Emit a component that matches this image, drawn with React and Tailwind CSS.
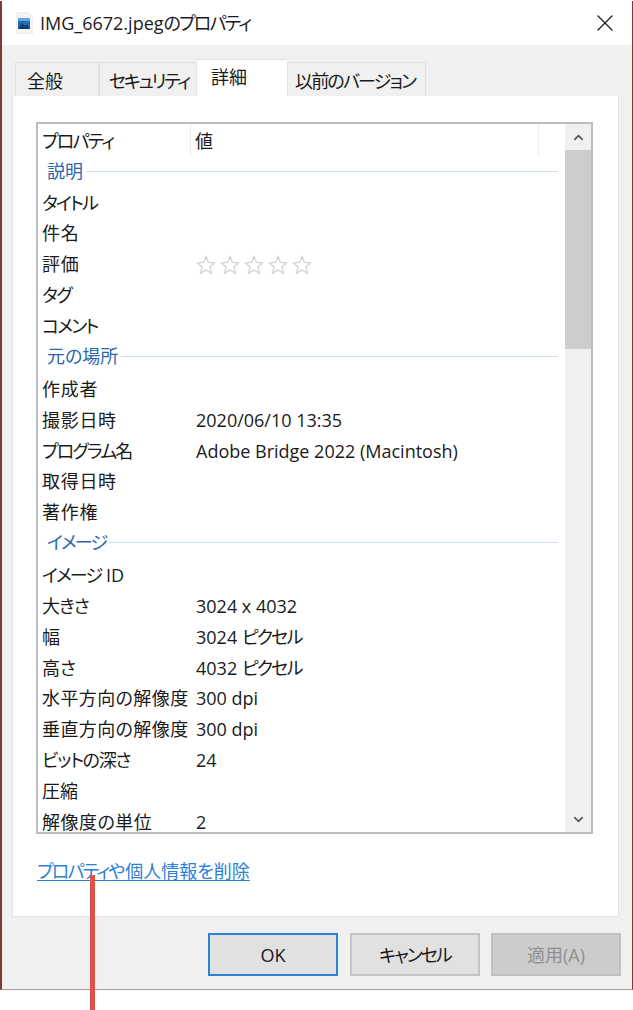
import React from 'react'
import { X, ChevronUp, ChevronDown } from 'lucide-react'

// katakana runs are set tighter than the font's own proportional widths
const K = ({ children }) => <span className="tracking-[-1.8px]">{children}</span>

const WIDE = 'tracking-[0.7px]'

const rows = [
  { id: 's1', section: '説明' },
  { id: 'title', name: <K>タイトル</K> },
  { id: 'subject', name: '件名', className: WIDE },
  { id: 'rating', name: '評価', className: WIDE, stars: true },
  { id: 'tag', name: 'タグ', className: 'tracking-[-1.5px]' },
  { id: 'comment', name: <K>コメント</K> },
  { id: 's2', section: '元の場所', gap: true },
  { id: 'author', name: '作成者', className: WIDE },
  { id: 'taken', name: '撮影日時', className: WIDE, value: '2020/06/10 13:35' },
  { id: 'program', name: <K>プログラム名</K>, value: 'Adobe Bridge 2022 (Macintosh)' },
  { id: 'acquired', name: '取得日時', className: WIDE },
  { id: 'copyright', name: '著作権', className: WIDE },
  { id: 's3', section: <K>イメージ</K>, gap: true },
  { id: 'imageid', name: <><K>イメージ</K> ID</> },
  { id: 'size', name: '大きさ', className: 'tracking-[-1px]', value: '3024 x 4032' },
  { id: 'width', name: '幅', value: <>3024 <K>ピクセル</K></> },
  { id: 'height', name: '高さ', value: <>4032 <K>ピクセル</K></> },
  { id: 'hres', name: '水平方向の解像度', className: 'tracking-[0.4px]', value: '300 dpi' },
  { id: 'vres', name: '垂直方向の解像度', className: 'tracking-[0.4px]', value: '300 dpi' },
  { id: 'depth', name: 'ビットの深さ', className: 'tracking-[-1.3px]', value: '24' },
  { id: 'compress', name: '圧縮' },
  { id: 'unit', name: '解像度の単位', className: 'tracking-[0.5px]', value: '2' },
]

const tabs = [
  { label: '全般', className: 'w-[84px] pl-[11px]' },
  { label: <span className="tracking-[-2.2px]">セキュリティ</span>, className: 'w-[98px] pl-[9px]' },
  { label: '詳細', active: true },
  { label: <K>以前のバージョン</K>, className: 'w-[139px] pl-[7px]' },
]

const Star = () => (
  <svg width="20" height="20" viewBox="0 0 20 20" fill="#fff" stroke="#cfcfcf" strokeWidth="1.2">
    <path d="M10 1.5l2.4 5.9 6.3.5-4.8 4.1 1.5 6.2L10 15l-5.4 3.2 1.5-6.2-4.8-4.1 6.3-.5z" />
  </svg>
)

const FileIcon = () => (
  <svg width="17" height="22" viewBox="0 0 17 22" className="block">
    <path d="M0 0h12l5 5v17H0z" fill="#f3f3f3" stroke="#e2e2e2" strokeWidth="0.5" />
    <rect x="2" y="6" width="12" height="11" fill="#1f6fb4" />
    <path d="M2 17l4-6 3 3 2-2 3 5z" fill="#0f3d6e" />
    <rect x="2" y="6" width="12" height="3" fill="#5fa4dc" />
  </svg>
)

const Button = ({ children, className }) => (
  <button className={`w-[130px] h-[43px] pt-[2px] flex items-center justify-center ${className}`}>{children}</button>
)

export default function App() {
  return (
    <div className="relative w-[633px] h-[1010px] bg-white pt-px text-[18px] text-[#1a1a1a] font-['Open_Sans','Noto_Sans_CJK_JP',sans-serif] [font-feature-settings:'palt']">
      <div className="h-[989px] flex flex-col bg-[#f0f0f0] border-l-2 border-r border-b border-l-[#7d3a3a] border-r-[#7d3a3a] border-b-[#a89a96]">
        {/* Title bar */}
        <div className="h-[44px] shrink-0 bg-white flex items-center pl-[14px] pr-[13px]">
          <FileIcon />
          <span className="ml-[7px]">IMG_6672.jpeg<K>のプロパティ</K></span>
          <X size={28} strokeWidth={1.2} className="ml-auto -mt-px text-[#222]" />
        </div>

        {/* Tabs */}
        <div className="h-[51px] shrink-0 flex items-end pl-[13px]">
          {tabs.map((tab, i) =>
            tab.active ? (
              <div key={i} className="w-[90px] h-[37px] bg-white border-t border-[#e4e4e4] pl-[14px] pt-[4px] relative z-10">
                {tab.label}
              </div>
            ) : (
              <div key={i} className={`h-[34px] pt-[3px] bg-[#f0f0f0] border border-b-0 border-[#e2e2e2] flex items-center whitespace-nowrap ${tab.className}`}>
                {tab.label}
              </div>
            )
          )}
        </div>

        {/* Panel */}
        <div className="ml-[10px] w-[607px] h-[821px] shrink-0 bg-white border border-t-0 border-[#e4e4e4] pl-[24px] pt-[26px]">
          <div className="-ml-px w-[557px] h-[712px] border-2 border-[#b9bcc0] flex overflow-hidden">
            <div className="flex-1 min-w-0">
              <div className="h-[32.5px] flex items-center">
                <div className="w-[153px] h-full pl-[4px] pt-[2px] border-r border-[#ececec] flex items-center"><K>プロパティ</K></div>
                <div className="w-[348px] h-full pl-[4px] pt-[2px] border-r border-[#ececec] flex items-center">値</div>
              </div>
              {rows.map((row) =>
                row.section ? (
                  <div key={row.id} className={`h-[30.8px] flex items-center pl-[9px] pr-[7px] text-[#2a67ad] ${row.gap ? 'mb-[1.5px]' : ''}`}>
                    <span className="whitespace-nowrap">{row.section}</span>
                    <span className="flex-1 h-px bg-[#cfdff0] ml-[3px]" />
                  </div>
                ) : (
                  <div key={row.id} className="h-[30.8px] pt-px flex items-center">
                    <div className={`w-[158px] shrink-0 pl-[4px] whitespace-nowrap ${row.className || ''}`}>{row.name}</div>
                    {row.stars ? (
                      <div className="flex gap-[4px]">
                        {[1, 2, 3, 4, 5].map((n) => (
                          <Star key={n} />
                        ))}
                      </div>
                    ) : (
                      <div className="whitespace-nowrap">{row.value}</div>
                    )}
                  </div>
                )
              )}
            </div>

            {/* Scrollbar */}
            <div className="w-[26px] shrink-0 bg-[#f0f0f0] flex flex-col">
              <div className="h-[26px] flex items-center justify-center">
                <ChevronUp size={15} strokeWidth={2.6} className="text-[#555]" />
              </div>
              <div className="h-[199px] bg-[#cdcdcd]" />
              <div className="flex-1" />
              <div className="h-[26px] flex items-center justify-center">
                <ChevronDown size={15} strokeWidth={2.6} className="text-[#555]" />
              </div>
            </div>
          </div>
          <a className="block mt-[24px] w-fit text-[#2a7fd8] underline underline-offset-2"><K>プロパティ</K>や個人情報を削除</a>
        </div>

        {/* Buttons */}
        <div className="flex mt-[16px] pl-[206px] gap-[12px]">
          <Button className="bg-[#e1e1e1] border-2 border-[#2f80d8]">OK</Button>
          <Button className="bg-[#e1e1e1] border-2 border-[#c4c4c4]"><span className="tracking-[-2px]">キャンセル</span></Button>
          <Button className="ml-[-1px] bg-[#cccccc] border-2 border-[#c0c0c0] text-[#8f8f8f]">適用(A)</Button>
        </div>
      </div>

      {/* Annotation line */}
      <div className="absolute left-[90px] top-[875px] w-[5px] h-[135px] bg-[#dc5248]" />
    </div>
  )
}
